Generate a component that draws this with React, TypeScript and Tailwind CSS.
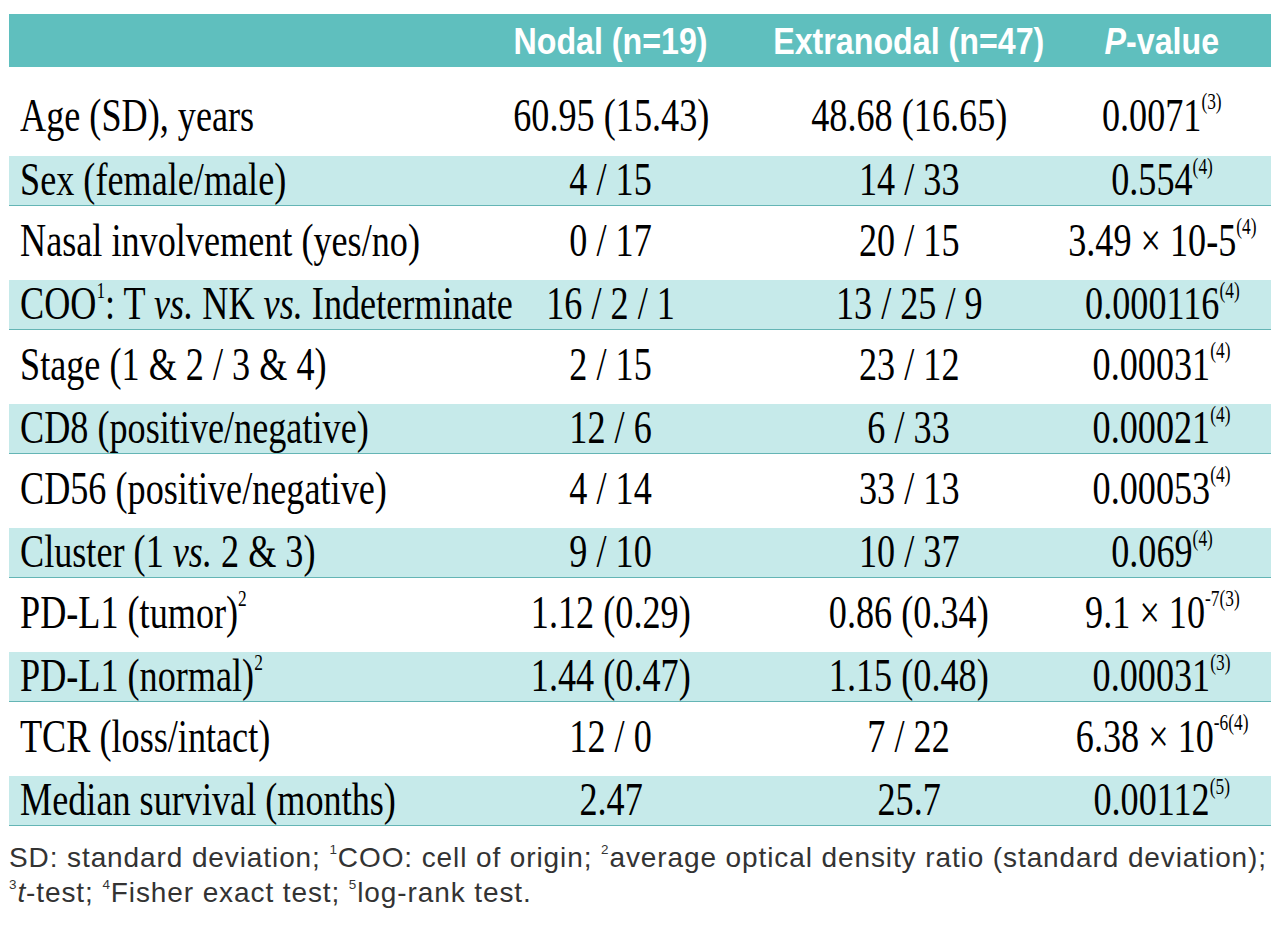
const rows = [
  { label: <>Age (SD), years</>, nodal: "60.95 (15.43)", extra: "48.68 (16.65)", p: <>0.0071<Sup>(3)</Sup></> },
  { label: <>Sex (female/male)</>, nodal: "4 / 15", extra: "14 / 33", p: <>0.554<Sup>(4)</Sup></> },
  { label: <>Nasal involvement (yes/no)</>, nodal: "0 / 17", extra: "20 / 15", p: <>3.49 × 10-5<Sup>(4)</Sup></> },
  {
    label: <>COO<Sup>1</Sup>: T <i>vs.</i> NK <i>vs.</i> Indeterminate</>,
    nodal: "16 / 2 / 1",
    extra: "13 / 25 / 9",
    p: <>0.000116<Sup>(4)</Sup></>,
  },
  { label: <>Stage (1 &amp; 2 / 3 &amp; 4)</>, nodal: "2 / 15", extra: "23 / 12", p: <>0.00031<Sup>(4)</Sup></> },
  { label: <>CD8 (positive/negative)</>, nodal: "12 / 6", extra: "6 / 33", p: <>0.00021<Sup>(4)</Sup></> },
  { label: <>CD56 (positive/negative)</>, nodal: "4 / 14", extra: "33 / 13", p: <>0.00053<Sup>(4)</Sup></> },
  { label: <>Cluster (1 <i>vs.</i> 2 &amp; 3)</>, nodal: "9 / 10", extra: "10 / 37", p: <>0.069<Sup>(4)</Sup></> },
  { label: <>PD-L1 (tumor)<Sup>2</Sup></>, nodal: "1.12 (0.29)", extra: "0.86 (0.34)", p: <>9.1 × 10<Sup>-7(3)</Sup></> },
  { label: <>PD-L1 (normal)<Sup>2</Sup></>, nodal: "1.44 (0.47)", extra: "1.15 (0.48)", p: <>0.00031<Sup>(3)</Sup></> },
  { label: <>TCR (loss/intact)</>, nodal: "12 / 0", extra: "7 / 22", p: <>6.38 × 10<Sup>-6(4)</Sup></> },
  { label: <>Median survival (months)</>, nodal: "2.47", extra: "25.7", p: <>0.00112<Sup>(5)</Sup></> },
];

function Sup({ children }: { children: React.ReactNode }) {
  return <sup className="relative top-[-0.2em] align-super text-[0.48em] leading-none">{children}</sup>;
}

const cols = "grid grid-cols-[502px_200px_396px_164px]";
const serif = "font-['Liberation_Serif',serif] text-[47px]";
const squeeze = "inline-block whitespace-nowrap [transform:scaleX(0.77)]";

export default function App() {
  return (
    <div className="min-h-[926px] w-[1280px] overflow-hidden bg-white pt-[14px] text-black">
      <div className="mx-[9px] w-[1262px]">
        {/* header */}
        <div className={`${cols} h-[53px] items-center bg-[#5fbfbe] font-['Liberation_Sans',sans-serif] text-[37px] font-bold text-white`}>
          <div />
          <div className="flex min-w-0 justify-center">
            <span className="inline-block whitespace-nowrap [transform:scaleX(0.87)]">Nodal (n=19)</span>
          </div>
          <div className="flex min-w-0 justify-center">
            <span className="inline-block whitespace-nowrap [transform:scaleX(0.87)]">Extranodal (n=47)</span>
          </div>
          <div className="flex min-w-0 justify-center pr-[54px]">
            <span className="inline-block whitespace-nowrap [transform:scaleX(0.87)]">
              <i>P</i>-value
            </span>
          </div>
        </div>

        {rows.map((row, i) => {
          const first = i === 0;
          const tinted = i % 2 === 1;
          return (
            <div
              key={i}
              className={
                first
                  ? `${cols} h-[89px] items-center pt-[7px] ${serif}`
                  : tinted
                    ? `${cols} h-[50px] items-center border-b border-[#64b5b5] bg-[#c6eaea] pb-[5px] ${serif}`
                    : `${cols} h-[74px] items-center pb-[6px] ${serif}`
              }
            >
              <div className="min-w-0 pl-[11px] leading-none">
                <span className={`${squeeze} origin-left`}>{row.label}</span>
              </div>
              <div className="flex min-w-0 justify-center leading-none">
                <span className={squeeze}>{row.nodal}</span>
              </div>
              <div className="flex min-w-0 justify-center leading-none">
                <span className={squeeze}>{row.extra}</span>
              </div>
              <div className="flex min-w-0 justify-center pr-[54px] leading-none">
                <span className={squeeze}>{row.p}</span>
              </div>
            </div>
          );
        })}

        {/* footnote */}
        <div className="pt-[14px] font-['Liberation_Sans',sans-serif] text-[28px] leading-[35px] tracking-[0.9px] text-[#333]">
          <div className="whitespace-nowrap">
            SD: standard deviation; <Sup>1</Sup>COO: cell of origin; <Sup>2</Sup>average optical density ratio (standard deviation);
          </div>
          <div className="whitespace-nowrap">
            <Sup>3</Sup>
            <i>t</i>-test; <Sup>4</Sup>Fisher exact test; <Sup>5</Sup>log-rank test.
          </div>
        </div>
      </div>
    </div>
  );
}
